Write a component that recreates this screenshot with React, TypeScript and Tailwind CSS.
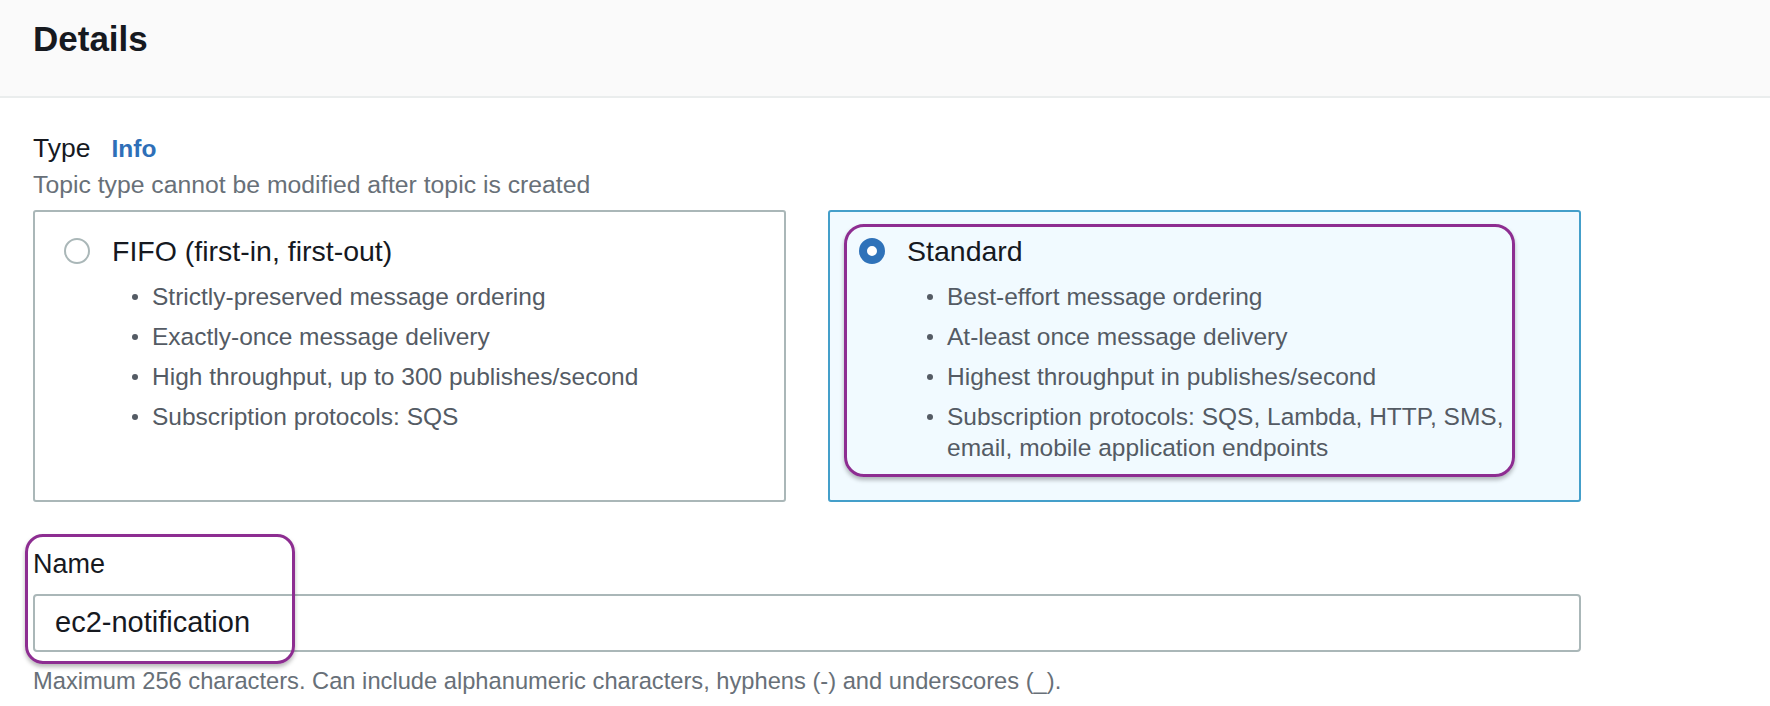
import React from "react"

type TopicType = {
  id: string
  title: string
  points: string[]
  selected: boolean
}

const topicTypes: TopicType[] = [
  {
    id: "fifo",
    title: "FIFO (first-in, first-out)",
    points: [
      "Strictly-preserved message ordering",
      "Exactly-once message delivery",
      "High throughput, up to 300 publishes/second",
      "Subscription protocols: SQS",
    ],
    selected: false,
  },
  {
    id: "standard",
    title: "Standard",
    points: [
      "Best-effort message ordering",
      "At-least once message delivery",
      "Highest throughput in publishes/second",
      "Subscription protocols: SQS, Lambda, HTTP, SMS, email, mobile application endpoints",
    ],
    selected: true,
  },
]

function Radio({ checked }: { checked: boolean }) {
  if (checked) {
    return (
      <span className="block h-[26px] w-[26px] shrink-0 rounded-full border-[8px] border-[#2f72b9] bg-white" />
    )
  }
  return (
    <span className="block h-[26px] w-[26px] shrink-0 rounded-full border-2 border-[#aab7b8] bg-white" />
  )
}

function TypeCard({ topic }: { topic: TopicType }) {
  return (
    <div
      className={`relative h-[292px] rounded-[3px] border-2 pl-[29px] pr-[30px] pt-[23px] ${
        topic.selected
          ? "border-[#449fca] bg-[#f1faff]"
          : "border-[#aab7b8] bg-white"
      }`}
    >
      {/* annotation outline around the chosen option */}
      {topic.selected && (
        <div className="pointer-events-none absolute left-[14px] top-[12px] h-[253px] w-[671px] rounded-[20px] border-[3px] border-[#8d2d91] shadow-[0_3px_4px_rgba(0,0,0,0.28)]" />
      )}
      <div className="flex h-[32px] items-center">
        <Radio checked={topic.selected} />
        <span className="ml-[22px] text-[28.5px] leading-[32px] text-[#16191f]">
          {topic.title}
        </span>
      </div>
      <ul className="ml-[48px] mt-[14px] flex list-none flex-col gap-[9px] p-0">
        {topic.points.map((p) => (
          <li
            key={p}
            className="flex text-[24.5px] leading-[31px] text-[#545b64]"
          >
            <span className="flex h-[31px] w-[40px] shrink-0 items-center justify-end pr-[14px]">
              <span className="block h-[6px] w-[6px] rounded-full bg-[#545b64]" />
            </span>
            <span>{p}</span>
          </li>
        ))}
      </ul>
    </div>
  )
}

export default function App() {
  return (
    <div className="min-h-screen w-full bg-white font-['Liberation_Sans',Arial,sans-serif]">
      <div className="h-[98px] border-b-2 border-[#eaeded] bg-[#fafafa] px-[33px] pt-[19px]">
        <h2 className="text-[35px] font-bold leading-[40px] text-[#16191f]">
          Details
        </h2>
      </div>

      <div className="pl-[33px] pr-[189px] pt-[35px]">
        <div className="flex items-baseline">
          <span className="text-[26.5px] leading-[30px] text-[#16191f]">Type</span>
          <span className="ml-[21px] text-[24.5px] font-bold leading-[30px] text-[#2e6fb8]">
            Info
          </span>
        </div>
        <p className="mt-[7px] text-[24.75px] leading-[28px] text-[#687078]">
          Topic type cannot be modified after topic is created
        </p>

        <div className="mt-[11px] grid grid-cols-2 gap-[42px]">
          {topicTypes.map((t) => (
            <TypeCard key={t.id} topic={t} />
          ))}
        </div>

        <div className="relative mt-[47px]">
          <div className="pointer-events-none absolute left-[-8px] top-[-15px] h-[130px] w-[270px] rounded-[18px] border-[3px] border-[#8d2d91] shadow-[0_3px_4px_rgba(0,0,0,0.28)]" />
          <div className="text-[27px] leading-[30px] text-[#16191f]">Name</div>
          <div className="mt-[15px] flex h-[58px] items-center rounded-[4px] border-2 border-[#aab7b8] bg-white pl-[20px]">
            <span className="text-[29px] text-[#16191f]">ec2-notification</span>
          </div>
          <p className="mt-[15px] text-[23.7px] leading-[28px] text-[#687078]">
            Maximum 256 characters. Can include alphanumeric characters, hyphens (-) and underscores (_).
          </p>
        </div>
      </div>
    </div>
  )
}
